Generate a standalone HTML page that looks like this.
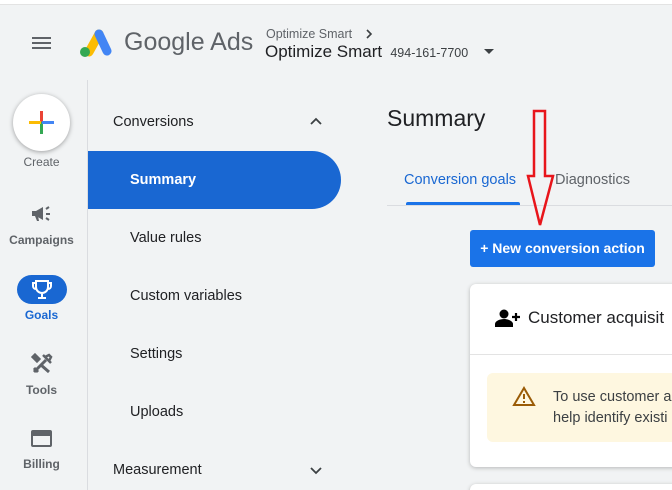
<!DOCTYPE html>
<html><head><style>
*{margin:0;padding:0;box-sizing:border-box}
html,body{width:672px;height:490px;overflow:hidden}
body{background:#f1f3f4;font-family:"Liberation Sans",Arial,sans-serif;position:relative;color:#202124}
.a{position:absolute;white-space:nowrap}
.n{font-size:14.5px;color:#202124}
</style></head><body>
<div class="a" style="left:0;top:0;width:672px;height:5px;background:#fff;border-bottom:1px solid #e3e3e3"></div>
<div class="a" style="left:32px;top:37px;width:19px;height:2px;background:#5f6368;box-shadow:0 5px 0 #5f6368,0 10px 0 #5f6368"></div>
<svg class="a" style="left:79px;top:28px" width="33" height="30" viewBox="0 0 33 30">
<line x1="10" y1="24" x2="20" y2="6" stroke="#fbbc04" stroke-width="9" stroke-linecap="round"/>
<line x1="20" y1="6" x2="28" y2="23" stroke="#4285f4" stroke-width="9" stroke-linecap="round"/>
<circle cx="6" cy="24" r="5" fill="#34a853"/>
</svg>
<div class="a" style="left:124px;top:28px;font-size:25px;color:#5f6368">Google Ads</div>
<div class="a" style="left:266px;top:27px;font-size:12.5px;color:#5f6368">Optimize Smart</div>
<svg class="a" style="left:364px;top:28px" width="10" height="12" viewBox="0 0 10 12"><path d="M3 2l4 4-4 4" fill="none" stroke="#3c4043" stroke-width="1.6"/></svg>
<div class="a" style="left:265px;top:42px;font-size:17px;color:#202124">Optimize Smart <span style="font-size:12.5px;color:#3c4043">&nbsp;494-161-7700</span></div>
<svg class="a" style="left:484px;top:49px" width="10" height="6" viewBox="0 0 10 6"><path d="M0 0h10L5 5z" fill="#3c4043"/></svg>
<div class="a" style="left:87px;top:80px;width:1px;height:410px;background:#dadce0"></div>
<div class="a" style="left:13px;top:94px;width:57px;height:57px;border-radius:50%;background:#fff;box-shadow:0 1px 5px rgba(0,0,0,.35)"></div>
<div class="a" style="left:40px;top:111px;width:3px;height:11px;background:#ea4335"></div>
<div class="a" style="left:40px;top:122px;width:3px;height:12px;background:#34a853"></div>
<div class="a" style="left:29px;top:121px;width:12px;height:3px;background:#fbbc04"></div>
<div class="a" style="left:42px;top:121px;width:12px;height:3px;background:#4285f4"></div>
<div class="a" style="left:0;width:83px;text-align:center;top:155px;font-size:12px;color:#5f6368">Create</div>
<svg class="a" style="left:31px;top:205px" width="22" height="18" viewBox="0 0 22 18"><path d="M1 6h4l7-4v13l-7-4H1z" fill="#5f6368"/><path d="M4 11l2 5h2l-1-5" fill="#5f6368"/><path d="M15 4l3-2M15 9h4M15 13l3 2" stroke="#5f6368" stroke-width="2"/></svg>
<div class="a" style="left:0;width:83px;text-align:center;top:233px;font-size:12px;color:#5f6368;font-weight:bold">Campaigns</div>
<div class="a" style="left:17px;top:275px;width:50px;height:29px;border-radius:15px;background:#1967d2"></div>
<svg class="a" style="left:32px;top:279px" width="20" height="21" viewBox="0 0 20 21"><path d="M4 2h12v6a6 6 0 0 1-12 0z M4 4H1v3a3 3 0 0 0 3 3 M16 4h3v3a3 3 0 0 1-3 3 M10 14v4 M6 19h8" fill="none" stroke="#fff" stroke-width="2"/><circle cx="10" cy="7" r="2" fill="#1967d2"/></svg>
<div class="a" style="left:0;width:83px;text-align:center;top:308px;font-size:12px;color:#1967d2;font-weight:bold">Goals</div>
<svg class="a" style="left:31px;top:353px" width="22" height="21" viewBox="0 0 22 21"><path d="M3 19L15 7M7 19l-4-4" stroke="#5f6368" stroke-width="3"/><path d="M12 2l8 8M14 4l4-2 2 2-2 4" stroke="#5f6368" stroke-width="2.5" fill="none"/><path d="M4 2l4 4-2 2-4-4zM10 12l8 7" stroke="#5f6368" stroke-width="3" fill="#5f6368"/></svg>
<div class="a" style="left:0;width:83px;text-align:center;top:383px;font-size:12px;color:#5f6368;font-weight:bold">Tools</div>
<div class="a" style="left:31px;top:430px;width:21px;height:17px;border:2.5px solid #5f6368;border-radius:2px;border-top-width:6px"></div>
<div class="a" style="left:0;width:83px;text-align:center;top:457px;font-size:12px;color:#5f6368;font-weight:bold">Billing</div>
<div class="a n" style="left:113px;top:114px">Conversions</div>
<svg class="a" style="left:310px;top:117px" width="12" height="8" viewBox="0 0 12 8"><path d="M1 7l5-5 5 5" fill="none" stroke="#3c4043" stroke-width="1.8"/></svg>
<div class="a" style="left:88px;top:151px;width:253px;height:58px;background:#1967d2;border-radius:0 29px 29px 0"></div>
<div class="a" style="left:130px;top:172px;font-size:14.5px;color:#fff;font-weight:bold">Summary</div>
<div class="a n" style="left:130px;top:230px">Value rules</div>
<div class="a n" style="left:130px;top:288px">Custom variables</div>
<div class="a n" style="left:130px;top:346px">Settings</div>
<div class="a n" style="left:130px;top:404px">Uploads</div>
<div class="a n" style="left:113px;top:462px">Measurement</div>
<svg class="a" style="left:310px;top:467px" width="12" height="8" viewBox="0 0 12 8"><path d="M1 1l5 5 5-5" fill="none" stroke="#3c4043" stroke-width="1.8"/></svg>
<div class="a" style="left:387px;top:105px;font-size:23px">Summary</div>
<div class="a" style="left:404px;top:172px;font-size:14.5px;color:#1967d2">Conversion goals</div>
<div class="a" style="left:555px;top:172px;font-size:14.5px;color:#5f6368">Diagnostics</div>
<div class="a" style="left:387px;top:205px;width:285px;height:1px;background:#dadce0"></div>
<div class="a" style="left:406px;top:202px;width:114px;height:3px;background:#1a73e8;border-radius:2px 2px 0 0"></div>
<div class="a" style="left:470px;top:230px;width:185px;height:37px;background:#1a73e8;border-radius:3px;color:#fff;font-size:14px;font-weight:bold;text-align:center;line-height:37px">+ New conversion action</div>
<div class="a" style="left:470px;top:284px;width:210px;height:183px;background:#fff;border-radius:6px;box-shadow:0 1px 4px rgba(0,0,0,.25)"></div>
<svg class="a" style="left:495px;top:309px" width="25" height="19" viewBox="0 0 25 19"><circle cx="9" cy="5" r="4.5" fill="#000"/><path d="M0 18v-3c0-3 5-5 9-5s9 2 9 5v3z" fill="#000"/><path d="M21 4v8M17 8h8" stroke="#000" stroke-width="2.2"/></svg>
<div class="a" style="left:528px;top:308px;font-size:17px">Customer acquisit</div>
<div class="a" style="left:470px;top:354px;width:202px;height:1px;background:#e3e3e3"></div>
<div class="a" style="left:487px;top:373px;width:190px;height:69px;background:#fef7e0;border-radius:6px"></div>
<svg class="a" style="left:512px;top:386px" width="24" height="21" viewBox="0 0 24 21"><path d="M12 2L22 19H2z" fill="none" stroke="#9a5b06" stroke-width="2"/><path d="M12 8v5M12 15v2" stroke="#9a5b06" stroke-width="2"/></svg>
<div class="a" style="left:553px;top:387px;font-size:14.5px;color:#3c4043;line-height:21px">To use customer a<br>help identify existi</div>
<div class="a" style="left:470px;top:484px;width:210px;height:20px;background:#fff;border-radius:6px;box-shadow:0 1px 4px rgba(0,0,0,.25)"></div>
<svg class="a" style="left:524px;top:108px" width="34" height="122" viewBox="0 0 34 122"><path d="M10 3h11v65h8L16 117 4 68h6z" fill="none" stroke="#e8151b" stroke-width="2.5" stroke-linejoin="miter"/></svg>
</body></html>
